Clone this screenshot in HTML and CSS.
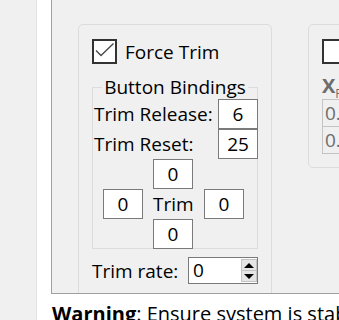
FILE: index.html
```html
<!DOCTYPE html>
<html lang="en">
  <head>
    <meta charset="UTF-8" />
    <meta name="viewport" content="width=device-width, initial-scale=1.0" />
    <title>Force Trim</title>
    <link rel="stylesheet" href="styles.css">
  </head>
  <body>
    <div class="page">
      <div class="scroller">
        <div class="groups">
          <div class="group force-trim">
            <label class="check-row">
              <span class="checkbox">
                <svg width="21" height="21" viewBox="0 0 21 21">
                  <polyline points="2,9.5 7,14.5 19.5,2.5" fill="none" stroke="#4a4a4a" stroke-width="1.4" />
                </svg>
              </span>
              Force Trim
            </label>
            <div class="bindings">
              <div class="bindings-title"><span>Button Bindings</span></div>
              <div class="bindings-body">
                <div class="field-row">
                  <span>Trim Release:</span>
                  <span class="box">6</span>
                </div>
                <div class="field-row">
                  <span>Trim Reset:</span>
                  <span class="box">25</span>
                </div>
                <div class="trim-cross">
                  <span class="box up">0</span>
                  <span class="box left">0</span>
                  <span class="trim-label">Trim</span>
                  <span class="box right">0</span>
                  <span class="box down">0</span>
                </div>
              </div>
            </div>
            <div class="rate-row">
              <span>Trim rate:</span>
              <div class="spin">
                <span class="spin-value">0</span>
                <div class="spin-buttons">
                  <span class="spin-btn"><i class="arrow-up"></i></span>
                  <span class="spin-btn"><i class="arrow-down"></i></span>
                </div>
              </div>
            </div>
          </div>
          <div class="group axis">
            <label class="check-row">
              <span class="checkbox"></span>
            </label>
            <div class="axis-label">X<sub>R</sub></div>
            <div class="axis-box">0.</div>
            <div class="axis-box">0.</div>
          </div>
        </div>
      </div>
      <p class="warning"><b>Warning</b>: Ensure system is stable before enabling trim.</p>
    </div>
  </body>
</html>
```

FILE: styles.css
```css
body {
  margin: 0;
  background-color: #f0f0f0;
  font-family: "Open Sans", sans-serif;
  font-size: 19px;
  color: #000;
  overflow: hidden;
}
.page {
  margin-left: 36px;
  height: 320px;
  padding-left: 14px;
  border-left: 1px solid #e3e3e3;
  background-color: #fff;
  overflow: hidden;
}
.scroller {
  box-sizing: border-box;
  height: 294px;
  padding: 24px 0 0 26px;
  border-left: 1px solid #a0a0a0;
  border-bottom: 1px solid #a0a0a0;
  background-color: #f0f0f0;
  overflow: hidden;
}
.groups {
  display: flex;
  align-items: flex-start;
  gap: 36px;
}
.group {
  flex: none;
  box-sizing: border-box;
  border: 1px solid #dcdcdc;
  border-radius: 5px;
  padding: 14px 13px 20px;
}
.force-trim {
  width: 194px;
}
.check-row {
  display: flex;
  align-items: center;
  gap: 8px;
  height: 25px;
}
.checkbox {
  box-sizing: border-box;
  width: 25px;
  height: 25px;
  border: 2px solid #333;
  background-color: #fff;
}
.checkbox svg {
  display: block;
}
.bindings {
  margin-top: 11px;
  width: 166px;
}
.bindings-title {
  display: flex;
  height: 24px;
}
.bindings-title span {
  padding: 0 2px;
  line-height: 24px;
}
.bindings-title::before,
.bindings-title::after {
  content: "";
  flex: 1;
  align-self: flex-end;
  height: 11px;
  border-top: 1px solid #dcdcdc;
}
.bindings-title::before {
  border-left: 1px solid #dcdcdc;
}
.bindings-title::after {
  border-right: 1px solid #dcdcdc;
}
.bindings-body {
  height: 149px;
  border: 1px solid #dcdcdc;
  border-top: none;
}
.field-row {
  display: flex;
  align-items: center;
  justify-content: space-between;
  height: 30px;
  padding-left: 1px;
  margin-right: -1px;
}
.box {
  box-sizing: border-box;
  display: flex;
  align-items: center;
  justify-content: center;
  width: 40px;
  height: 30px;
  border: 1px solid #7a7a7a;
  background-color: #fff;
}
.trim-cross {
  display: grid;
  grid-template-columns: 50px 51px 40px;
  grid-template-rows: repeat(3, 30px);
  margin-left: 10px;
}
.trim-cross .up {
  grid-column: 2;
  grid-row: 1;
}
.trim-cross .left {
  grid-column: 1;
  grid-row: 2;
}
.trim-label {
  grid-column: 2;
  grid-row: 2;
  width: 40px;
  text-align: center;
  line-height: 30px;
}
.trim-cross .right {
  grid-column: 3;
  grid-row: 2;
}
.trim-cross .down {
  grid-column: 2;
  grid-row: 3;
}
.rate-row {
  display: flex;
  align-items: center;
  justify-content: space-between;
  width: 166px;
  margin-top: 8px;
}
.spin {
  box-sizing: border-box;
  display: flex;
  width: 70px;
  height: 27px;
  border: 1px solid #7a7a7a;
  background-color: #fff;
}
.spin-value {
  flex: 1;
  padding-left: 4px;
  line-height: 25px;
}
.spin-buttons {
  display: flex;
  flex-direction: column;
  width: 16px;
  margin: 1px 0 1px;
}
.spin-btn {
  flex: 1;
  display: flex;
  align-items: center;
  justify-content: center;
  border: 1px solid #c3c3c3;
  background-color: #e5e5e5;
}
.spin-btn + .spin-btn {
  border-top: none;
}
.arrow-up,
.arrow-down {
  width: 0;
  height: 0;
  border-left: 5px solid transparent;
  border-right: 5px solid transparent;
}
.arrow-up {
  border-bottom: 5px solid #000;
}
.arrow-down {
  border-top: 5px solid #000;
}
.axis {
  width: 120px;
  height: 144px;
}
.axis-label {
  margin-top: 8px;
  height: 27px;
  line-height: 27px;
  color: #6d6d6d;
  font-weight: bold;
  font-size: 20px;
}
.axis-label sub {
  font-weight: normal;
  font-size: 12px;
}
.axis-box {
  box-sizing: border-box;
  width: 100px;
  height: 28px;
  padding-left: 2px;
  border: 1px solid #c4c4c4;
  line-height: 26px;
  color: #6d6d6d;
}
.axis-box + .axis-box {
  margin-top: -1px;
}
.warning {
  margin: 6px 0 0;
  padding-left: 1px;
  font-size: 20px;
  line-height: 28px;
  white-space: nowrap;
}
```
